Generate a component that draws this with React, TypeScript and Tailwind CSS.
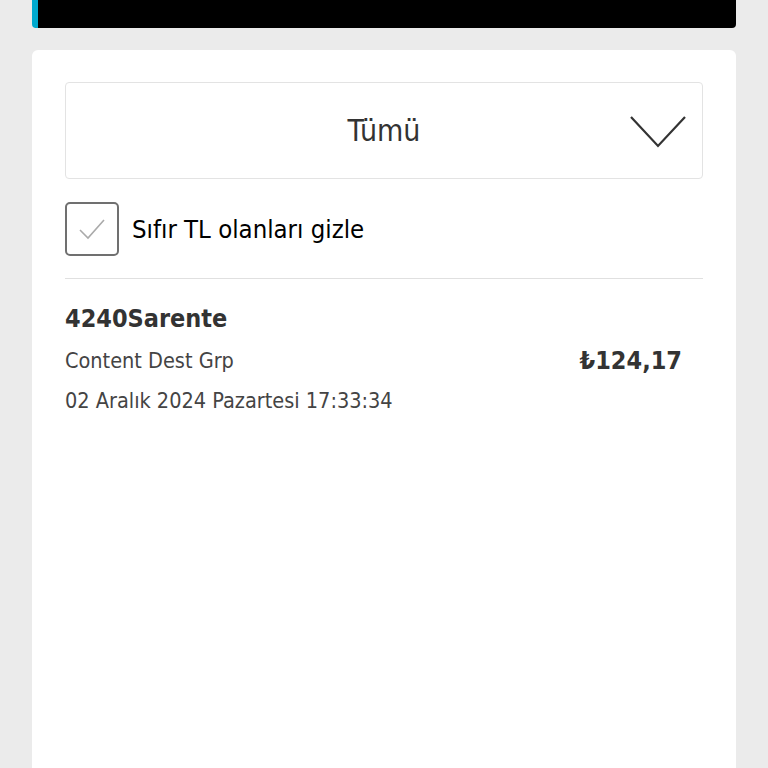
import React from 'react'

const font = { fontFamily: '"Liberation Sans Narrow", "DejaVu Sans Condensed", "Liberation Sans", sans-serif' }

export default function App() {
  return (
    <div className="min-h-[768px] bg-[#ebebeb] px-8" style={font}>
      <div className="h-[28px] rounded-b-[4px] bg-black border-l-[6px] border-[#00a9ce]" />
      <div className="mt-[22px] min-h-[718px] rounded-t-[6px] bg-white px-[33px] pt-[32px]">
        {/* select */}
        <div className="relative flex h-[97px] items-center justify-center rounded-[4px] border border-[#e3e3e3]">
          <span className="text-[30px] text-[#333]">Tümü</span>
          <svg className="absolute right-[16px] top-[33px]" width="56" height="32" viewBox="0 0 56 32" fill="none">
            <path d="M1 1 L28 30 L55 1" stroke="#333" strokeWidth="2.2" />
          </svg>
        </div>

        {/* checkbox */}
        <label className="mt-[23px] flex items-center gap-[13px]">
          <span className="flex h-[54px] w-[54px] items-center justify-center rounded-[5px] border-2 border-[#707070]">
            <svg width="28" height="22" viewBox="0 0 28 22" fill="none">
              <path d="M2 12 L10 20 L26 2" stroke="#aaa" strokeWidth="1.6" />
            </svg>
          </span>
          <span className="text-[25.5px] text-black">Sıfır TL olanları gizle</span>
        </label>

        <div className="mt-[22px] h-px bg-[#e0e0e0]" />

        {/* item */}
        <div className="flex items-center justify-between pt-[22px] pr-[21px]">
          <div className="flex flex-col">
            <span className="text-[25px] font-bold leading-[36px] text-[#333]">4240Sarente</span>
            <span className="mt-[4px] text-[21.5px] leading-[40px] text-[#444]">Content Dest Grp</span>
            <span className="text-[21.5px] leading-[40px] text-[#444]">02 Aralık 2024 Pazartesi 17:33:34</span>
          </div>
          <span className="text-[25px] font-bold text-[#333]">₺124,17</span>
        </div>
      </div>
    </div>
  )
}
